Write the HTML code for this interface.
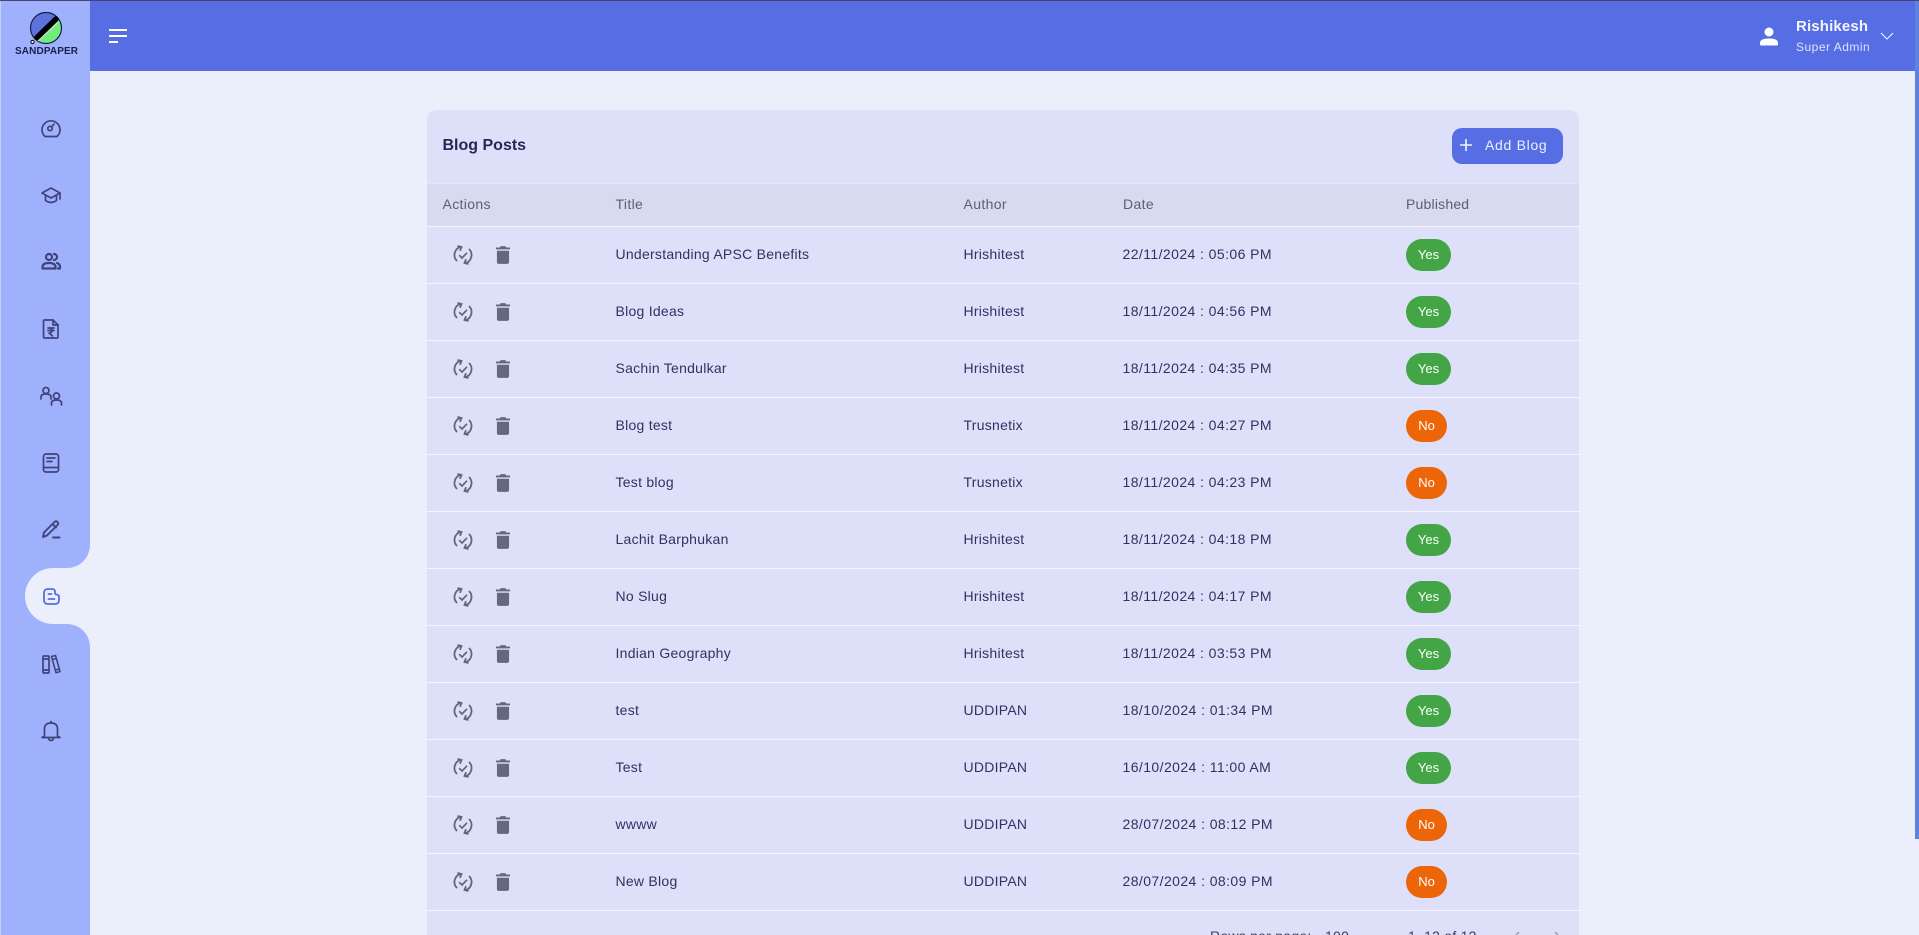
<!DOCTYPE html>
<html lang="en"><head><meta charset="utf-8"><title>Blog Posts</title>
<style>
*{box-sizing:border-box}
html,body{margin:0;padding:0;width:1919px;height:935px;overflow:hidden;background:#eaeffb;font-family:"Liberation Sans",sans-serif;color:#2c2f5b}
.abs{position:absolute}
#top{position:absolute;left:0;top:0;width:1919px;height:1px;background:#45456b}
#hdr{position:absolute;left:90px;top:1px;width:1825px;height:70px;background:#566de4}
#side{position:absolute;left:1px;top:1px;width:89px;height:934px;background:#9fb0fd}
#strip{position:absolute;left:0;top:1px;width:1px;height:934px;background:#c5cffc}
#sb{position:absolute;left:1915px;top:1px;width:4px;height:838px;background:#5f82e0}
#card{position:absolute;left:427px;top:110px;width:1152px;height:825px;background:#dee0fa;border-radius:10px 10px 0 0;overflow:hidden}
.t{position:absolute;white-space:nowrap;line-height:18px;font-size:14px}
.row{position:absolute;left:0;width:1152px;height:57px;border-bottom:1px solid #f5f6ff}
.row .t{top:18px;color:#2f3260;letter-spacing:.26px}
.row .d{left:695.500px;letter-spacing:.42px}
.pill{position:absolute;top:12px;height:32px;border-radius:16px;color:#fff;font-size:13px;line-height:32px;text-align:center}
.y{left:979px;width:45px;background:#43a546}
.n{left:979px;width:41px;background:#ec6508}
svg{position:absolute;overflow:visible}
.ni{fill:none;stroke:#41427a;stroke-width:1.7;stroke-linecap:round;stroke-linejoin:round}
.s{left:26px;top:18px}
.b{left:69px;top:19px}
</style></head><body>
<svg width="0" height="0" style="left:0;top:0"><defs>
<symbol id="sync" viewBox="0 0 20 20" overflow="visible"><g fill="none" stroke="#63657a" stroke-width="1.800"><path d="M8 1.700A8.500 8.500 0 0 0 4 16M12 18.300A8.500 8.500 0 0 0 16 4"/><path d="M4.500 1 8.500 2 7 5.800M15.500 19 11.500 18 13 14.200"/><path d="M6.200 10.200l2.800 2.800 5-5.200" stroke-width="1.700"/></g></symbol>
<symbol id="bin" viewBox="0 0 15 19"><path d="M5 0h5l1 1.500h4v2H0v-2h4ZM1 5h13v12q0 2-2 2H3q-2 0-2-2Z" fill="#65677c"/></symbol>
</defs></svg>
<div id="top"></div><div id="hdr"></div><div id="side"></div><div id="strip"></div><div id="sb"></div>

<!-- logo -->
<svg style="left:28px;top:10px" width="38" height="38" viewBox="0 0 38 38">
<circle cx="18" cy="18" r="15.500" fill="#5c73dd"/>
<path d="M29.500 7.600A15.500 15.500 0 0 1 9 30.600Z" fill="#6fee7d"/>
<circle cx="18" cy="18" r="15.500" fill="none" stroke="#16204a" stroke-width="1.200"/>
<path d="M9 27.500 28 9" stroke="#000" stroke-width="5.500" stroke-linecap="round"/>
<path d="M10 31 30 12.500" stroke="#ddd" stroke-width="1"/>
<circle cx="4.500" cy="32" r="1.600" fill="#fff" stroke="#000"/>
</svg>
<div class="t" style="left:15px;top:43px;font-size:10px;font-weight:bold;color:#18204a;letter-spacing:.12px">SANDPAPER</div>

<!-- menu -->
<svg style="left:109px;top:29px" width="18" height="14"><path d="M0 1h18M0 7h18M0 13h9" stroke="#fff" stroke-width="2"/></svg>

<!-- nav icons -->
<svg class="ni" style="left:41px;top:118px" width="20" height="20" viewBox="0 0 20 20"><path d="M4 18.500A9 9 0 1 1 16 18.500Z"/><circle cx="9" cy="10.500" r="2.200"/><path d="M11 8.500 13 6"/></svg>
<svg class="ni" style="left:41px;top:185px" width="20" height="20" viewBox="0 0 20 20"><path d="M10 3 1 8l9 5 9-5Z"/><path d="M4.500 10.500v5q5.500 4 11 0v-5M19 8v6"/></svg>
<svg class="ni" style="left:41px;top:251px;stroke-width:2.200" width="20" height="20" viewBox="0 0 20 20"><circle cx="8" cy="6" r="3"/><path d="M1.500 17.500v-1.500q0-4 6.500-4t6.500 4v1.500Z"/><path d="M13 3a3 3 0 0 1 0 6M16 12q3 1 3 4v1.500h-2" /></svg>
<svg class="ni" style="left:42px;top:319px" width="18" height="20" viewBox="0 0 18 20"><path d="M2.500 1H11l5 5v12q0 1-1 1H2.500q-1 0-1-1V2q0-1 1-1Z"/><path d="M11 1v5h5M6 9h6M6 11.500h6M7 9q3 0 3 2.500T7 14l3.500 3"/></svg>
<svg class="ni" style="left:40px;top:386px" width="22" height="20" viewBox="0 0 22 20"><circle cx="6" cy="4.500" r="3"/><path d="M1 13v-2q0-3 5-3t5 3v2"/><circle cx="16.500" cy="10" r="3"/><path d="M11.500 19v-2q0-3 5-3t5 3v2"/></svg>
<svg class="ni" style="left:42px;top:453px" width="18" height="20" viewBox="0 0 18 20"><rect x="1.500" y="1" width="15" height="18" rx="2.500"/><path d="M1.500 14.500h15M5 5h8M5 8.500h5"/></svg>
<svg class="ni" style="left:41px;top:519px" width="20" height="20" viewBox="0 0 20 20"><path d="M2 18l1-4.500L13.500 3q1.500-1.500 3 0t0 3L6 16.500ZM11.500 5l3.500 3.500M12 18.500h6.500" stroke-width="1.900"/></svg>

<!-- active tab -->
<svg style="left:0;top:0" width="100" height="700"><path d="M90 545A23 23 0 0 1 67 568H53A28 28 0 0 0 25 596A28 28 0 0 0 53 624H67A23 23 0 0 1 90 647Z" fill="#eaeffb"/></svg>
<svg style="left:43px;top:588px;fill:none;stroke:#566de4;stroke-width:1.800;stroke-linecap:round;stroke-linejoin:round" width="17" height="17" viewBox="0 0 17 17"><path d="M5 1h4q3 0 3 3v1q0 1.500 1.500 1.500T16 8v4q0 4-4 4H5q-4 0-4-4V5q0-4 4-4Z"/><path d="M5.500 6h3M5.500 11h6"/></svg>

<svg class="ni" style="left:42px;top:654px" width="19" height="20" viewBox="0 0 19 20"><path d="M1 3q0-1 1-1h4q1 0 1 1v15q0 1-1 1H2q-1 0-1-1ZM1 5h6M1 16h6"/><path d="M9.500 2.500 13.500 1.500 18 17.500 14 18.800ZM10.500 5.500l4-1M13.500 16l4-1" stroke-width="1.500"/></svg>
<svg class="ni" style="left:41px;top:720px" width="20" height="21" viewBox="0 0 20 21"><path d="M10 1.500v1.500M3.500 16V9q0-6 6.500-6t6.500 6v7l2.500 1.500H1Z"/><path d="M7.500 17.500q0 3 2.500 3t2.500-3"/></svg>

<!-- header right -->
<svg style="left:1759px;top:27px" width="20" height="20" viewBox="0 0 20 20" fill="#fff"><circle cx="10" cy="5" r="4.500"/><path d="M1 17.500V16q0-4.500 9-4.500t9 4.500v1.500q0 1-1 1H2q-1 0-1-1Z"/></svg>
<div class="t" style="left:1796px;top:18px;font-size:15px;font-weight:bold;color:#f2f4ff;letter-spacing:.15px">Rishikesh</div>
<div class="t" style="left:1796px;top:38px;font-size:12px;color:#dde3fd;letter-spacing:.5px">Super Admin</div>
<svg style="left:1880px;top:32px" width="14" height="8"><path d="M1 1l6 6 6-6" fill="none" stroke="#fff" stroke-width="1"/></svg>

<div id="card">
<div class="t" style="left:15.500px;top:27px;font-size:16px;font-weight:bold;color:#232858;letter-spacing:0">Blog Posts</div>
<div class="abs" style="left:1025px;top:18px;width:111px;height:36px;background:#566de4;border-radius:10px"></div>
<svg style="left:1032px;top:28px" width="14" height="14"><path d="M7 1v12M1 7h12" stroke="#f4f5ff" stroke-width="1.600"/></svg>
<div class="t" style="left:1058px;top:26px;font-size:14px;color:#eef0ff;letter-spacing:.7px">Add Blog</div>
<div class="abs" style="left:0;top:73px;width:1152px;height:44px;background:#d7dbf0;border-top:1px solid #e8e6f3;border-bottom:1px solid #f5f6ff"></div>
<div class="t" style="left:15.500px;top:85px;color:#5b5e75;letter-spacing:.35px">Actions</div>
<div class="t" style="left:188.500px;top:85px;color:#5b5e75;letter-spacing:.35px">Title</div>
<div class="t" style="left:536.500px;top:85px;color:#5b5e75;letter-spacing:.35px">Author</div>
<div class="t" style="left:696px;top:85px;color:#5b5e75;letter-spacing:.35px">Date</div>
<div class="t" style="left:979px;top:85px;color:#5b5e75;letter-spacing:.2px">Published</div>

<div class="row" style="top:117px"><svg class="s" width="20" height="20"><use href="#sync"/></svg><svg class="b" width="14" height="18"><use href="#bin"/></svg><div class="t" style="left:188.500px">Understanding APSC Benefits</div><div class="t" style="left:536.500px">Hrishitest</div><div class="t d">22/11/2024 : 05:06 PM</div><div class="pill y">Yes</div></div>
<div class="row" style="top:174px"><svg class="s" width="20" height="20"><use href="#sync"/></svg><svg class="b" width="14" height="18"><use href="#bin"/></svg><div class="t" style="left:188.500px">Blog Ideas</div><div class="t" style="left:536.500px">Hrishitest</div><div class="t d">18/11/2024 : 04:56 PM</div><div class="pill y">Yes</div></div>
<div class="row" style="top:231px"><svg class="s" width="20" height="20"><use href="#sync"/></svg><svg class="b" width="14" height="18"><use href="#bin"/></svg><div class="t" style="left:188.500px">Sachin Tendulkar</div><div class="t" style="left:536.500px">Hrishitest</div><div class="t d">18/11/2024 : 04:35 PM</div><div class="pill y">Yes</div></div>
<div class="row" style="top:288px"><svg class="s" width="20" height="20"><use href="#sync"/></svg><svg class="b" width="14" height="18"><use href="#bin"/></svg><div class="t" style="left:188.500px">Blog test</div><div class="t" style="left:536.500px">Trusnetix</div><div class="t d">18/11/2024 : 04:27 PM</div><div class="pill n">No</div></div>
<div class="row" style="top:345px"><svg class="s" width="20" height="20"><use href="#sync"/></svg><svg class="b" width="14" height="18"><use href="#bin"/></svg><div class="t" style="left:188.500px">Test blog</div><div class="t" style="left:536.500px">Trusnetix</div><div class="t d">18/11/2024 : 04:23 PM</div><div class="pill n">No</div></div>
<div class="row" style="top:402px"><svg class="s" width="20" height="20"><use href="#sync"/></svg><svg class="b" width="14" height="18"><use href="#bin"/></svg><div class="t" style="left:188.500px">Lachit Barphukan</div><div class="t" style="left:536.500px">Hrishitest</div><div class="t d">18/11/2024 : 04:18 PM</div><div class="pill y">Yes</div></div>
<div class="row" style="top:459px"><svg class="s" width="20" height="20"><use href="#sync"/></svg><svg class="b" width="14" height="18"><use href="#bin"/></svg><div class="t" style="left:188.500px">No Slug</div><div class="t" style="left:536.500px">Hrishitest</div><div class="t d">18/11/2024 : 04:17 PM</div><div class="pill y">Yes</div></div>
<div class="row" style="top:516px"><svg class="s" width="20" height="20"><use href="#sync"/></svg><svg class="b" width="14" height="18"><use href="#bin"/></svg><div class="t" style="left:188.500px">Indian Geography</div><div class="t" style="left:536.500px">Hrishitest</div><div class="t d">18/11/2024 : 03:53 PM</div><div class="pill y">Yes</div></div>
<div class="row" style="top:573px"><svg class="s" width="20" height="20"><use href="#sync"/></svg><svg class="b" width="14" height="18"><use href="#bin"/></svg><div class="t" style="left:188.500px">test</div><div class="t" style="left:536.500px">UDDIPAN</div><div class="t d">18/10/2024 : 01:34 PM</div><div class="pill y">Yes</div></div>
<div class="row" style="top:630px"><svg class="s" width="20" height="20"><use href="#sync"/></svg><svg class="b" width="14" height="18"><use href="#bin"/></svg><div class="t" style="left:188.500px">Test</div><div class="t" style="left:536.500px">UDDIPAN</div><div class="t d">16/10/2024 : 11:00 AM</div><div class="pill y">Yes</div></div>
<div class="row" style="top:687px"><svg class="s" width="20" height="20"><use href="#sync"/></svg><svg class="b" width="14" height="18"><use href="#bin"/></svg><div class="t" style="left:188.500px">wwww</div><div class="t" style="left:536.500px">UDDIPAN</div><div class="t d">28/07/2024 : 08:12 PM</div><div class="pill n">No</div></div>
<div class="row" style="top:744px"><svg class="s" width="20" height="20"><use href="#sync"/></svg><svg class="b" width="14" height="18"><use href="#bin"/></svg><div class="t" style="left:188.500px">New Blog</div><div class="t" style="left:536.500px">UDDIPAN</div><div class="t d">28/07/2024 : 08:09 PM</div><div class="pill n">No</div></div>

<div class="t" style="left:783px;top:817px;color:#3a3d63;letter-spacing:.25px">Rows per page:</div>
<div class="t" style="left:898px;top:817px;color:#3a3d63;letter-spacing:.25px">100</div>
<div class="t" style="left:981px;top:817px;color:#3a3d63;letter-spacing:.25px">1–12 of 12</div>
<svg style="left:1082px;top:821px" width="60" height="14" fill="none" stroke="#9a9cb5" stroke-width="1.500"><path d="M10 1 4 7l6 6M46 1l6 6-6 6"/></svg>
</div>
</body></html>
